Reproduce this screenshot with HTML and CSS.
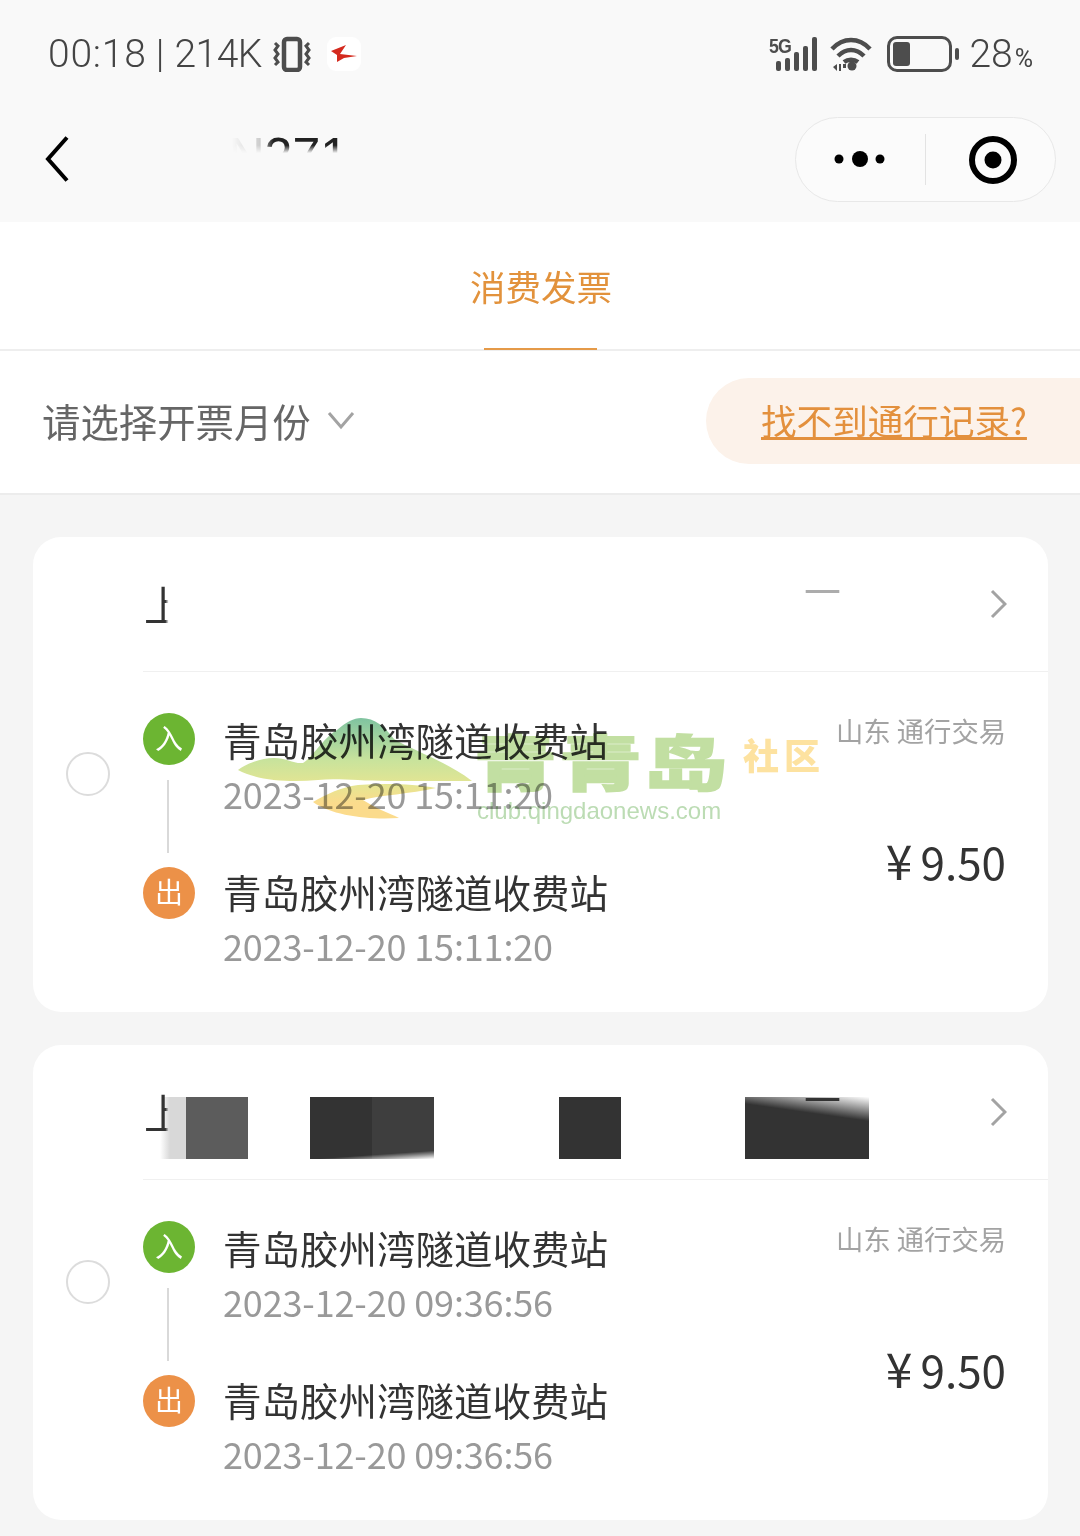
FILE: index.html
```html
<!DOCTYPE html>
<html lang="zh-CN">
<head>
<meta charset="utf-8">
<title>消费发票</title>
<link rel="stylesheet" href="styles.css">
</head>
<body>
<div class="page">
  <header class="top">
    <div class="status">
      <span class="status-text"><span class="st-time">00:18</span><span class="st-bar">|</span><span class="st-net">214K</span></span>
      <svg class="ic-vibrate" width="44" height="36" viewBox="0 0 44 36"><rect x="14" y="3" width="16" height="31" rx="3" fill="none" stroke="#4d4d4d" stroke-width="4.500"/><path d="M5 7l3 3-3 4 3 4-3 4 3 4-3 3M39 7l-3 3 3 4-3 4 3 4-3 4 3 3" fill="none" stroke="#4d4d4d" stroke-width="3"/></svg>
      <span class="app-chip"><svg width="34" height="34" viewBox="0 0 34 34"><path d="M4 14l15-6-6 9 17 2-13 2-7 4 0-7z" fill="#d42a1e"/></svg></span>
      <span class="status-right">
        <span class="sig"><b class="fiveg">5G</b><svg width="50" height="36" viewBox="0 0 50 36"><g fill="#4d4d4d"><rect x="7" y="25" width="5" height="10" rx="2"/><rect x="16" y="22" width="5" height="13" rx="2"/><rect x="25" y="16" width="5" height="19" rx="2"/><rect x="34" y="10" width="5" height="25" rx="2"/><rect x="43" y="1" width="5" height="34" rx="2"/></g></svg></span>
        <svg class="ic-wifi" width="44" height="36" viewBox="0 0 44 36"><path d="M3 13C14 1 30 1 41 13M9 20c8-8 18-8 26 0M15 26c4-3 10-3 14 0" fill="none" stroke="#4d4d4d" stroke-width="4.500"/><circle cx="23" cy="30" r="4.500" fill="#4d4d4d"/><path d="M4 31l4-3v7zM10 28h2v7h-2zM14 28h3v4h-3z" fill="#4d4d4d"/></svg>
        <span class="battery"><span class="battery-level"></span></span><span class="battery-nub"></span>
        <span class="pct">28<small>%</small></span>
      </span>
    </div>
    <div class="nav">
      <svg class="ic-back" width="24" height="48" viewBox="0 0 24 48"><path d="M22 2.500L3 24l19 21.500" fill="none" stroke="#000" stroke-width="4"/></svg>
      <span class="nav-title">N271</span>
      <div class="capsule">
        <svg class="ic-more" width="54" height="18" viewBox="0 0 54 18"><circle cx="5" cy="9" r="4.500"/><circle cx="26" cy="9" r="8"/><circle cx="46" cy="9" r="4.500"/></svg>
        <span class="cap-div"></span>
        <svg class="ic-target" width="50" height="50" viewBox="0 0 50 50"><circle cx="25" cy="25" r="21" fill="none" stroke="#000" stroke-width="6"/><circle cx="25" cy="25" r="8.500"/></svg>
      </div>
    </div>
  </header>

  <div class="tabs"><span class="tab">消费发票</span></div>

  <div class="filter">
    <span class="month">请选择开票月份</span>
    <svg class="ic-down" width="28" height="20" viewBox="0 0 28 20"><path d="M2 3l12 14L26 3" fill="none" stroke="#a3a3a3" stroke-width="3"/></svg>
    <span class="help"><span class="help-link">找不到通行记录?</span></span>
  </div>

  <main class="list">
    <section class="card">
      <div class="card-head">
        <span class="ghost-start">上</span>
        <span class="ghost-end ghost-faint">公司</span>
        <svg class="ic-next" width="18" height="32" viewBox="0 0 18 32"><path d="M3 3l13 13L3 29" fill="none" stroke="#a3a3a3" stroke-width="3"/></svg>
      </div>
      <div class="card-body">
        <span class="radio"></span>
        <div class="track"><span class="badge in">入</span><span class="track-line"></span><span class="badge out">出</span></div>
        <div class="stops">
          <div class="stop"><div class="stop-name">青岛胶州湾隧道收费站</div><div class="stop-time">2023-12-20 15:11:20</div></div>
          <div class="stop"><div class="stop-name">青岛胶州湾隧道收费站</div><div class="stop-time">2023-12-20 15:11:20</div></div>
        </div>
        <div class="side"><div class="region">山东 通行交易</div><div class="price"><span class="yen">¥</span>9.50</div></div>
      </div>
    </section>

    <section class="card">
      <div class="card-head">
        <span class="redact r1"></span><span class="redact r2"></span><span class="redact r3"></span><span class="redact r4"></span>
        <span class="ghost-start">上</span>
        <span class="ghost-end">公司</span>
        <svg class="ic-next" width="18" height="32" viewBox="0 0 18 32"><path d="M3 3l13 13L3 29" fill="none" stroke="#a3a3a3" stroke-width="3"/></svg>
      </div>
      <div class="card-body">
        <span class="radio"></span>
        <div class="track"><span class="badge in">入</span><span class="track-line"></span><span class="badge out">出</span></div>
        <div class="stops">
          <div class="stop"><div class="stop-name">青岛胶州湾隧道收费站</div><div class="stop-time">2023-12-20 09:36:56</div></div>
          <div class="stop"><div class="stop-name">青岛胶州湾隧道收费站</div><div class="stop-time">2023-12-20 09:36:56</div></div>
        </div>
        <div class="side"><div class="region">山东 通行交易</div><div class="price"><span class="yen">¥</span>9.50</div></div>
      </div>
    </section>
  </main>

  <div class="watermark">
    <svg class="wm-mountain" width="250" height="110" viewBox="0 0 250 110">
      <defs><linearGradient id="wmg" gradientUnits="userSpaceOnUse" x1="0" y1="0" x2="0" y2="100"><stop offset="0" stop-color="#7fc3a0"/><stop offset=".42" stop-color="#c8e39c"/><stop offset=".68" stop-color="#e6e592"/><stop offset=".85" stop-color="#fbdb8c"/><stop offset="1" stop-color="#fbdb8c"/></linearGradient></defs>
      <path d="M0 52C8 46 22 40 36 40c12 0 20 6 29 5 10-6 20-25 34-33C108 4 116 0 123 0c14 0 24 9 33 21 20 12 52 22 78 42H150c-30 0-50-3-70-1-30 3-62 0-80-10z" fill="url(#wmg)"/>
      <path d="M75 84c14-8 28-15 45-17 28-2 56-1 78 3-26 6-55 7-73 12 12 8 26 13 36 18-30 2-66-2-86-16z" fill="url(#wmg)"/>
    </svg>
    <span class="wm-name">青青岛</span>
    <span class="wm-club">社区</span>
    <span class="wm-url">club.qingdaonews.com</span>
  </div>
</div>
</body>
</html>
```

FILE: styles.css
```css
* { box-sizing: border-box; }
html, body { margin: 0; padding: 0; }
body { font-family: "Noto Sans CJK SC", "Noto Sans", sans-serif; background: #f5f5f5; }
.page { position: relative; width: 1080px; height: 1536px; overflow: hidden; background: #f5f5f5; }

.top { height: 222px; background: #f9f9f9; }
.status { height: 108px; display: flex; align-items: center; padding-left: 48px; color: #444; }
.status-text { font-family: Roboto, sans-serif; font-weight: 300; font-size: 39px; width: 222px; display: flex; white-space: nowrap; }
.st-time { letter-spacing: .8px; }
.st-bar { margin-left: 9px; }
.st-net { margin-left: 10px; letter-spacing: -.5px; }
.ic-vibrate { flex: none; }
.app-chip { width: 34px; height: 34px; margin-left: 13px; margin-top: -1px; background: #fff; border-radius: 9px; display: flex; }
.status-right { margin-left: auto; display: flex; align-items: center; padding-right: 47px; }
.sig { position: relative; display: flex; width: 50px; height: 36px; }
.fiveg { position: absolute; left: 0; top: -2px; font: 700 21px/24px "Liberation Sans", sans-serif; letter-spacing: -1px; transform: scaleX(.85); transform-origin: left; color: #4d4d4d; }
.ic-wifi { margin-left: 10px; }
.battery { margin-left: 14px; width: 65px; height: 36px; border: 3px solid #4d4d4d; border-radius: 10px; padding: 3px; display: block; }
.battery-level { display: block; width: 17px; height: 24px; background: #4d4d4d; border-radius: 3px; }
.battery-nub { width: 4px; height: 12px; margin-left: 3px; background: #4d4d4d; border-radius: 2px; }
.pct { font-family: Roboto, sans-serif; font-weight: 300; font-size: 39px; margin-left: 10px; line-height: 1; }
.pct small { font-size: 25px; font-weight: 400; margin-left: 2px; }

.nav { height: 114px; display: flex; align-items: flex-start; padding-left: 45px; }
.ic-back { margin-top: 27px; flex: none; }
.nav-title { margin-left: 46px; margin-top: 23px; height: 26px; width: 233px; overflow: hidden; font-family: "Liberation Sans", sans-serif; font-size: 50px; line-height: 50px; color: #222; white-space: nowrap; text-align: right; -webkit-mask-image: linear-gradient(to right, transparent 50%, rgba(0,0,0,.2) 62%, #000 68%), linear-gradient(to bottom, #000 55%, transparent 85%); -webkit-mask-composite: source-in; mask-composite: intersect; }
.capsule { margin-left: auto; margin-right: 24px; margin-top: 9px; width: 261px; height: 85px; border: 1px solid #e8e8e8; border-radius: 43px; background: #fbfbfb; display: flex; align-items: center; padding-left: 38px; }
.ic-more { flex: none; margin-top: -2px; }
.cap-div { width: 1px; height: 51px; background: #e3e3e3; margin-left: 37px; }
.ic-target { flex: none; margin-left: 42px; }

.tabs { height: 129px; background: #fff; border-bottom: 2px solid #eeeeee; display: flex; justify-content: center; }
.tab { width: 113px; height: 128px; padding-left: 2px; display: flex; justify-content: center; align-items: center; border-bottom: 2px solid #e59a48; color: #e2923c; font-size: 35.500px; white-space: nowrap; }

.filter { height: 144px; background: #fff; border-bottom: 2px solid #ececec; display: flex; align-items: center; padding-left: 42px; }
.month { font-size: 38.400px; line-height: 50px; margin-top: -5px; color: #666; white-space: nowrap; }
.ic-down { margin-left: 16px; margin-top: -4px; }
.help { margin-left: auto; width: 374px; height: 86px; margin-top: -2px; background: #fcf2ea; border-radius: 43px 0 0 43px; padding-left: 55px; display: flex; align-items: center; }
.help-link { font-size: 35.600px; line-height: 50px; margin-top: -3px; color: #e3903d; text-decoration: underline; text-decoration-thickness: 3px; white-space: nowrap; }

.list { padding: 42px 32px 0 33px; display: flex; flex-direction: column; gap: 33px; }
.card { height: 475px; background: #fff; border-radius: 28px; }
.card-head { position: relative; margin-left: 110px; height: 135px; border-bottom: 1px solid #f0f0f0; display: flex; align-items: flex-start; }
.ghost-start { position: absolute; left: 1px; top: 40px; font-size: 41px; line-height: 52px; color: #333; -webkit-mask-image: linear-gradient(to right, #000 52%, transparent 60%); mask-image: linear-gradient(to right, #000 52%, transparent 60%); }
.ghost-end { position: absolute; left: 617px; top: 42px; height: 14px; overflow: hidden; font-size: 42px; line-height: 52px; color: #333; white-space: nowrap; -webkit-mask-image: linear-gradient(to right, transparent 40%, #000 55%); mask-image: linear-gradient(to right, transparent 40%, #000 55%); }
.ghost-faint { opacity: .4; }
.ic-next { position: absolute; right: 41px; top: 51px; }
.redact { display: block; height: 62px; margin-top: 52px; background: #333; }
.r1 { width: 88px; margin-left: 17px; background: linear-gradient(to right, #fff 0, #d8d8d8 10px, #d8d8d8 26px, #5c5c5c 26px); }
.r2 { width: 124px; margin-left: 62px; background: linear-gradient(176deg, transparent 88%, #fff 100%), linear-gradient(to right, #333 50%, #3e3e3e 50%); }
.r3 { width: 62px; margin-left: 125px; }
.r4 { width: 124px; margin-left: 124px; background: linear-gradient(188deg, #fff 0, #333 24px); }

.card-body { display: flex; align-items: flex-start; padding-top: 41px; padding-left: 33px; padding-right: 42px; }
.radio { flex: none; width: 44px; height: 44px; margin-top: 39px; border-radius: 50%; border: 2px solid #dcdcdc; background: #fff; }
.track { flex: none; width: 52px; margin-left: 33px; display: flex; flex-direction: column; align-items: center; }
.badge { width: 52px; height: 52px; border-radius: 50%; color: #fff; font-size: 28px; line-height: 48px; text-align: center; }
.in { background: #6cb532; }
.out { background: #ec9148; }
.track-line { width: 2px; height: 73px; margin: 15px 2px 14px 0; background: #d9d9d9; }
.stops { margin-left: 28px; display: flex; flex-direction: column; }
.stop { height: 152px; }
.stop-name { font-size: 38.500px; line-height: 53px; height: 54px; color: #333; white-space: nowrap; }
.stop-time { font-size: 36px; line-height: 52px; color: #999; white-space: nowrap; letter-spacing: -.15px; }
.side { margin-left: auto; text-align: right; }
.region { font-size: 27.300px; line-height: 34px; color: #a3a3a3; white-space: nowrap; }
.price { margin-top: 84px; font-size: 44px; line-height: 56px; color: #333; white-space: nowrap; }
.yen { font-size: 48px; margin-right: 8px; }

.watermark { position: absolute; left: 238px; top: 718px; width: 590px; height: 110px; mix-blend-mode: multiply; pointer-events: none; }
.wm-mountain { position: absolute; left: 0; top: 0; }
.wm-name { position: absolute; left: 236px; top: 2px; font-size: 83px; line-height: 80px; letter-spacing: 2px; font-weight: 900; white-space: nowrap; transform: scaleY(.72); color: #c2dfa2; -webkit-text-stroke: 2px #c2dfa2; }
.wm-club { position: absolute; left: 505px; top: 11px; font-size: 36px; line-height: 50px; font-weight: 900; color: #fde2a0; white-space: nowrap; letter-spacing: 5px; }
.wm-url { position: absolute; left: 239px; top: 80px; font-family: "Liberation Sans", sans-serif; font-size: 24px; line-height: 26px; color: #bcdcb4; white-space: nowrap; }
```
